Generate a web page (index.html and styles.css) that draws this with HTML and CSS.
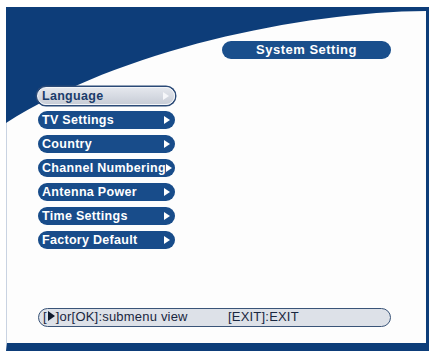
FILE: index.html
```html
<!DOCTYPE html>
<html lang="en">
<head>
    <meta charset="UTF-8">
    <meta name="viewport" content="width=device-width, initial-scale=1.0">
    <title>System Setting</title>
    <link rel="stylesheet" href="styles.css">
</head>
<body>
    <div class="screen">
        <!-- curved blue header shape -->
        <svg class="swoosh" width="420" height="130" viewBox="0 0 420 130">
            <path d="M0,0 H420 V4 C294,5 114,43 0,116 Z" fill="#0d3d79"/>
        </svg>

        <div class="title-row">
            <div class="title">System Setting</div>
        </div>

        <ul class="menu">
            <li class="menu-item active"><span>Language</span><i class="arrow"></i></li>
            <li class="menu-item"><span>TV Settings</span><i class="arrow"></i></li>
            <li class="menu-item"><span>Country</span><i class="arrow"></i></li>
            <li class="menu-item"><span>Channel Numbering</span><i class="arrow"></i></li>
            <li class="menu-item"><span>Antenna Power</span><i class="arrow"></i></li>
            <li class="menu-item"><span>Time Settings</span><i class="arrow"></i></li>
            <li class="menu-item"><span>Factory Default</span><i class="arrow"></i></li>
        </ul>

        <div class="help-bar">
            <span class="help-ok">[<b class="tri"></b>]or[OK]:submenu view</span>
            <span class="help-exit">[EXIT]:EXIT</span>
        </div>
    </div>
</body>
</html>
```

FILE: styles.css
```css
body {
    margin: 0;
    padding: 0;
    background: #ffffff;
    font-family: 'Liberation Sans', Arial, sans-serif;
    width: 429px;
    height: 351px;
    overflow: hidden;
}
.screen {
    position: relative;
    margin: 7px 0 0 6px;
    border-left: 1px solid #c9d3e2;
    border-right: 3px solid #0d3d79;
    border-bottom: 8px solid #0d3d79;
    background: #fdfdfd;
    display: flex;
    flex-direction: column;
    padding: 34px 35px 16px 31px;
    width: 353px;   /* 419 inner minus padding */
    height: 286px;  /* 336 inner minus padding */
}
.swoosh {
    position: absolute;
    top: 0;
    left: -1px;
}
.title-row {
    position: relative;
    display: flex;
    justify-content: flex-end;
}
.title {
    width: 169px;
    height: 18px;
    line-height: 18px;
    background: #1a4f8c;
    border-radius: 9px;
    color: #ffffff;
    font-size: 13px;
    font-weight: bold;
    letter-spacing: 0.5px;
    text-align: center;
}
.menu {
    position: relative;
    list-style: none;
    margin: 28px 0 0 0;
    padding: 0;
    display: flex;
    flex-direction: column;
    gap: 6px;
}
.menu-item {
    width: 137px;
    height: 18px;
    box-sizing: border-box;
    padding: 0 5px 0 4px;
    border-radius: 9px;
    background: #184c8a;
    color: #ffffff;
    font-size: 12.5px;
    font-weight: bold;
    letter-spacing: 0.3px;
    line-height: 18px;
    display: flex;
    justify-content: space-between;
    align-items: center;
    white-space: nowrap;
}
.menu-item.active {
    width: 138px;
    margin-left: -1px;
    background: linear-gradient(#e4e7ed, #c8cdd7);
    color: #1b3c6b;
    border: 1px solid #f4f6f9;
    box-shadow: 0 0 0 1.5px #2b4a77;
    line-height: 16px;
}
.arrow {
    width: 0;
    height: 0;
    border-top: 4.5px solid transparent;
    border-bottom: 4.5px solid transparent;
    border-left: 6px solid #ffffff;
    flex-shrink: 0;
}
.menu-item.active .arrow {
    border-left-color: #f6f7fa;
}
.help-bar {
    position: relative;
    margin-top: auto;
    height: 19px;
    box-sizing: border-box;
    border: 1.5px solid #3a5478;
    border-radius: 10px;
    background: #dde1e8;
    color: #1a2740;
    font-size: 13px;
    letter-spacing: 0.2px;
    line-height: 16px;
    padding-left: 4px;
    display: flex;
}
.help-ok {
    width: 185px;
}
.tri {
    display: inline-block;
    width: 0;
    height: 0;
    border-top: 5px solid transparent;
    border-bottom: 5px solid transparent;
    border-left: 7px solid #101a2c;
    margin: 0 1px;
}
```
